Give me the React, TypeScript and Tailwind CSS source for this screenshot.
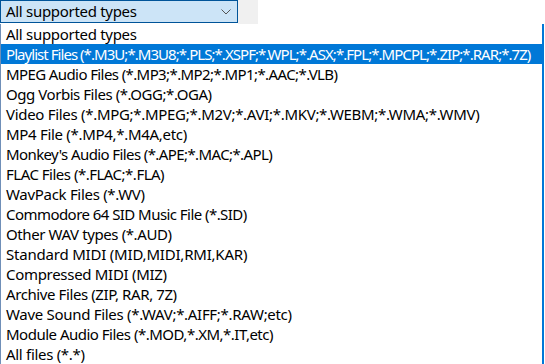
import React from 'react';

const types = [
  { label: 'All supported types', fit: 'tracking-[-0.3px]' },
  { label: 'Playlist Files (*.M3U;*.M3U8;*.PLS;*.XSPF;*.WPL;*.ASX;*.FPL;*.MPCPL;*.ZIP;*.RAR;*.7Z)', fit: 'tracking-[-0.95px]' },
  { label: 'MPEG Audio Files (*.MP3;*.MP2;*.MP1;*.AAC;*.VLB)', fit: 'tracking-[-0.6px]' },
  { label: 'Ogg Vorbis Files (*.OGG;*.OGA)', fit: 'tracking-[-0.45px]' },
  { label: 'Video Files (*.MPG;*.MPEG;*.M2V;*.AVI;*.MKV;*.WEBM;*.WMA;*.WMV)', fit: 'tracking-[-0.3px]' },
  { label: 'MP4 File (*.MP4,*.M4A,etc)', fit: 'tracking-[-0.3px]' },
  { label: "Monkey's Audio Files (*.APE;*.MAC;*.APL)", fit: 'tracking-[-0.6px]' },
  { label: 'FLAC Files (*.FLAC;*.FLA)', fit: 'tracking-[-0.5px]' },
  { label: 'WavPack Files (*.WV)', fit: 'tracking-[-0.3px]' },
  { label: 'Commodore 64 SID Music File (*.SID)', fit: 'tracking-[-0.55px]' },
  { label: 'Other WAV types (*.AUD)', fit: 'tracking-[-0.4px]' },
  { label: 'Standard MIDI (MID,MIDI,RMI,KAR)', fit: 'tracking-[-0.2px]' },
  { label: 'Compressed MIDI (MIZ)', fit: 'tracking-[-0.3px]' },
  { label: 'Archive Files (ZIP, RAR, 7Z)', fit: 'tracking-[-0.4px]' },
  { label: 'Wave Sound Files (*.WAV;*.AIFF;*.RAW;etc)', fit: 'tracking-[-0.3px]' },
  { label: 'Module Audio Files (*.MOD,*.XM,*.IT,etc)', fit: 'tracking-[-0.5px]' },
  { label: 'All files (*.*)', fit: 'tracking-[-0.3px]' },
];

export default function App() {
  const selected = 1;

  return (
    <div className="w-[545px] h-[364px] bg-white overflow-hidden font-['Noto_Sans',sans-serif] text-[15px] leading-none text-black">
      <div className="flex h-[24px]">
        <div className="w-[238px] h-[23px] bg-[#cce4f7] border border-[#005499] flex items-center justify-between pl-[5px] pr-[6px] tracking-[-0.3px]">
          <span>All supported types</span>
          <svg width="10" height="6" viewBox="0 0 10 6" className="mt-[1px]">
            <path d="M0.5 0.5 L5 5 L9.5 0.5" fill="none" stroke="#555" strokeWidth="1" />
          </svg>
        </div>
        <div className="w-[20px] h-[24px] bg-[#f0f0f0]"></div>
      </div>
      <ul className="w-[544px] border-l border-r-2 border-l-[#6f8fb8] border-r-[#0078d7]">
        {types.map((t, i) => (
          <li
            key={t.label}
            className={`h-[20px] flex items-center pl-[5px] pt-[1px] whitespace-nowrap ${t.fit} ${i === selected ? 'bg-[#0078d7] text-white' : ''}`}
          >
            {t.label}
          </li>
        ))}
      </ul>
    </div>
  );
}
